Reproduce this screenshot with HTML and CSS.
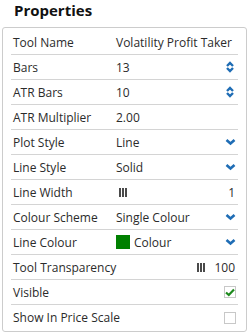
FILE: index.html
```html
<!DOCTYPE html>
<html lang="en">
<head>
    <meta charset="UTF-8">
    <title>Properties</title>
    <link rel="stylesheet" href="styles.css">
</head>
<body>
    <h1 class="title">Properties</h1>
    <div class="panel">
        <div class="row">
            <span class="label">Tool Name</span>
            <span class="value">Volatility Profit Taker</span>
        </div>
        <div class="row">
            <span class="label">Bars</span>
            <span class="value">13</span>
            <svg class="spin" width="8" height="12" viewBox="0 0 8 12"><path d="M1 5 L4 2 L7 5" /><path d="M1 7 L4 10 L7 7" /></svg>
        </div>
        <div class="row">
            <span class="label">ATR Bars</span>
            <span class="value">10</span>
            <svg class="spin" width="8" height="12" viewBox="0 0 8 12"><path d="M1 5 L4 2 L7 5" /><path d="M1 7 L4 10 L7 7" /></svg>
        </div>
        <div class="row">
            <span class="label">ATR Multiplier</span>
            <span class="value">2.00</span>
        </div>
        <div class="row">
            <span class="label">Plot Style</span>
            <span class="value">Line</span>
            <svg class="chev" width="11" height="8" viewBox="0 0 11 8"><path d="M1.5 2 L5.5 5.5 L9.5 2" /></svg>
        </div>
        <div class="row">
            <span class="label">Line Style</span>
            <span class="value">Solid</span>
            <svg class="chev" width="11" height="8" viewBox="0 0 11 8"><path d="M1.5 2 L5.5 5.5 L9.5 2" /></svg>
        </div>
        <div class="row">
            <span class="label">Line Width</span>
            <span class="value"><span class="bars"><i></i><i></i><i></i></span></span>
            <span class="num">1</span>
        </div>
        <div class="row">
            <span class="label">Colour Scheme</span>
            <span class="value">Single Colour</span>
            <svg class="chev" width="11" height="8" viewBox="0 0 11 8"><path d="M1.5 2 L5.5 5.5 L9.5 2" /></svg>
        </div>
        <div class="row">
            <span class="label">Line Colour</span>
            <span class="value"><span class="swatch"></span>Colour</span>
            <svg class="chev" width="11" height="8" viewBox="0 0 11 8"><path d="M1.5 2 L5.5 5.5 L9.5 2" /></svg>
        </div>
        <div class="row">
            <span class="label wide">Tool Transparency</span>
            <span class="value right"><span class="bars"><i></i><i></i><i></i></span></span>
            <span class="num">100</span>
        </div>
        <div class="row">
            <span class="label">Visible</span>
            <span class="value"></span>
            <span class="check on"><svg width="10" height="9" viewBox="0 0 10 9"><path d="M1 4.5 L3.8 7 L9 1.5" /></svg></span>
        </div>
        <div class="row">
            <span class="label wide">Show In Price Scale</span>
            <span class="value"></span>
            <span class="check"></span>
        </div>
    </div>
</body>
</html>
```

FILE: styles.css
```css
body {
    margin: 0;
    font-family: 'Open Sans', 'Noto Sans', sans-serif;
    color: #2b2b2b;
    background: #ffffff;
}

.title {
    margin: 0;
    padding: 0 0 0 14px;
    height: 27px;
    font-size: 15px;
    font-weight: 700;
    line-height: 21px;
    color: #111111;
}

.panel {
    margin: 0 2px;
    width: 245px;
    box-sizing: border-box;
    border: 1px solid #cccccc;
    border-radius: 3px;
    padding: 2px 8px 1px;
}

.row {
    display: flex;
    align-items: center;
    height: 25px;
    box-sizing: border-box;
    padding: 0 2px 0 2px;
    border-bottom: 1px solid #d4d4d4;
    font-size: 12px;
}

.row:last-child {
    border-bottom: none;
}

.label {
    width: 103px;
    flex: none;
    white-space: nowrap;
}

.label.wide {
    width: auto;
}

.value {
    flex: 1;
    display: flex;
    align-items: center;
    white-space: nowrap;
}

.value.right {
    justify-content: flex-end;
    padding-right: 9px;
}

.spin {
    margin-right: 2px;
}

.spin path {
    fill: none;
    stroke: #1f6db5;
    stroke-width: 2.4;
}

.chev path {
    fill: none;
    stroke: #1f6db5;
    stroke-width: 2.6;
}

.bars {
    display: flex;
    gap: 1px;
    height: 9px;
    margin-left: 3px;
}

.bars i {
    width: 2px;
    background: #4a4a4a;
}

.num {
    margin-right: 1px;
}

.swatch {
    display: inline-block;
    width: 14px;
    height: 14px;
    background: #008000;
    margin-right: 4px;
}

.check {
    width: 12px;
    height: 12px;
    box-sizing: border-box;
    border: 1px solid #c8c8c8;
    display: flex;
    align-items: center;
    justify-content: center;
}

.check path {
    fill: none;
    stroke: #1e8a1e;
    stroke-width: 2.2;
}
```
